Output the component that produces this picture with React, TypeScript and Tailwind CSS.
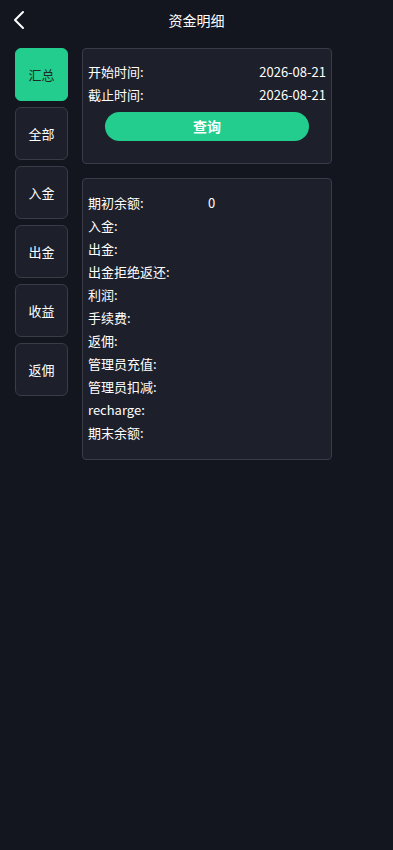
const tabs = ["汇总", "全部", "入金", "出金", "收益", "返佣"];

const rows: { label: string; value?: string }[] = [
  { label: "期初余额:", value: "0" },
  { label: "入金:" },
  { label: "出金:" },
  { label: "出金拒绝返还:" },
  { label: "利润:" },
  { label: "手续费:" },
  { label: "返佣:" },
  { label: "管理员充值:" },
  { label: "管理员扣减:" },
  { label: "recharge:" },
  { label: "期末余额:" },
];

export default function App() {
  return (
    <div
      className="min-h-[850px] w-full bg-[#13151f] text-white"
      style={{ fontFamily: '"Microsoft YaHei", "Noto Sans CJK SC", "Noto Sans", sans-serif' }}
    >
      {/* header */}
      <div className="relative flex h-10 items-center justify-center">
        <button className="absolute left-[12px] top-[10px]">
          <svg width="16" height="20" viewBox="0 0 16 20" fill="none">
            <polyline
              points="11,2 3,10 11,18"
              stroke="#fff"
              strokeWidth="2"
              strokeLinecap="round"
              strokeLinejoin="round"
            />
          </svg>
        </button>
        <h1 className="text-[14px] font-normal">资金明细</h1>
      </div>

      <div className="flex gap-[14px] px-[15px] pt-2">
        {/* side tabs */}
        <div className="flex flex-col gap-[6px]">
          {tabs.map((t, i) => (
            <button
              key={t}
              className={`flex h-[53px] w-[53px] items-center justify-center rounded-[6px] border text-[13px] ${
                i === 0
                  ? "border-[#22cd8d] bg-[#22cd8d] text-[#1d2a26]"
                  : "border-[#393b47] bg-[#1d1f2b] text-white"
              }`}
            >
              {t}
            </button>
          ))}
        </div>

        <div className="flex w-[250px] flex-col gap-[14px]">
          {/* date filter */}
          <div className="rounded-[4px] border border-[#393b47] bg-[#1d1f2b] px-[5px] pb-[22px] pt-[11px] text-[13px]">
            <div className="flex h-[23px] items-center justify-between">
              <span>开始时间:</span>
              <span>2026-08-21</span>
            </div>
            <div className="flex h-[23px] items-center justify-between">
              <span>截止时间:</span>
              <span>2026-08-21</span>
            </div>
            <div className="mt-[6px] flex justify-center">
              <button className="h-[29px] w-[204px] rounded-full bg-[#22cd8d] text-[14px] font-bold text-white">
                查询
              </button>
            </div>
          </div>

          {/* summary */}
          <div className="rounded-[4px] border border-[#393b47] bg-[#1d1f2b] px-[5px] pb-[15px] pt-[12px] text-[13px]">
            {rows.map((r) => (
              <div key={r.label} className="flex h-[23px] items-center">
                <span className="w-[120px]">{r.label}</span>
                <span>{r.value ?? ""}</span>
              </div>
            ))}
          </div>
        </div>
      </div>
    </div>
  );
}
